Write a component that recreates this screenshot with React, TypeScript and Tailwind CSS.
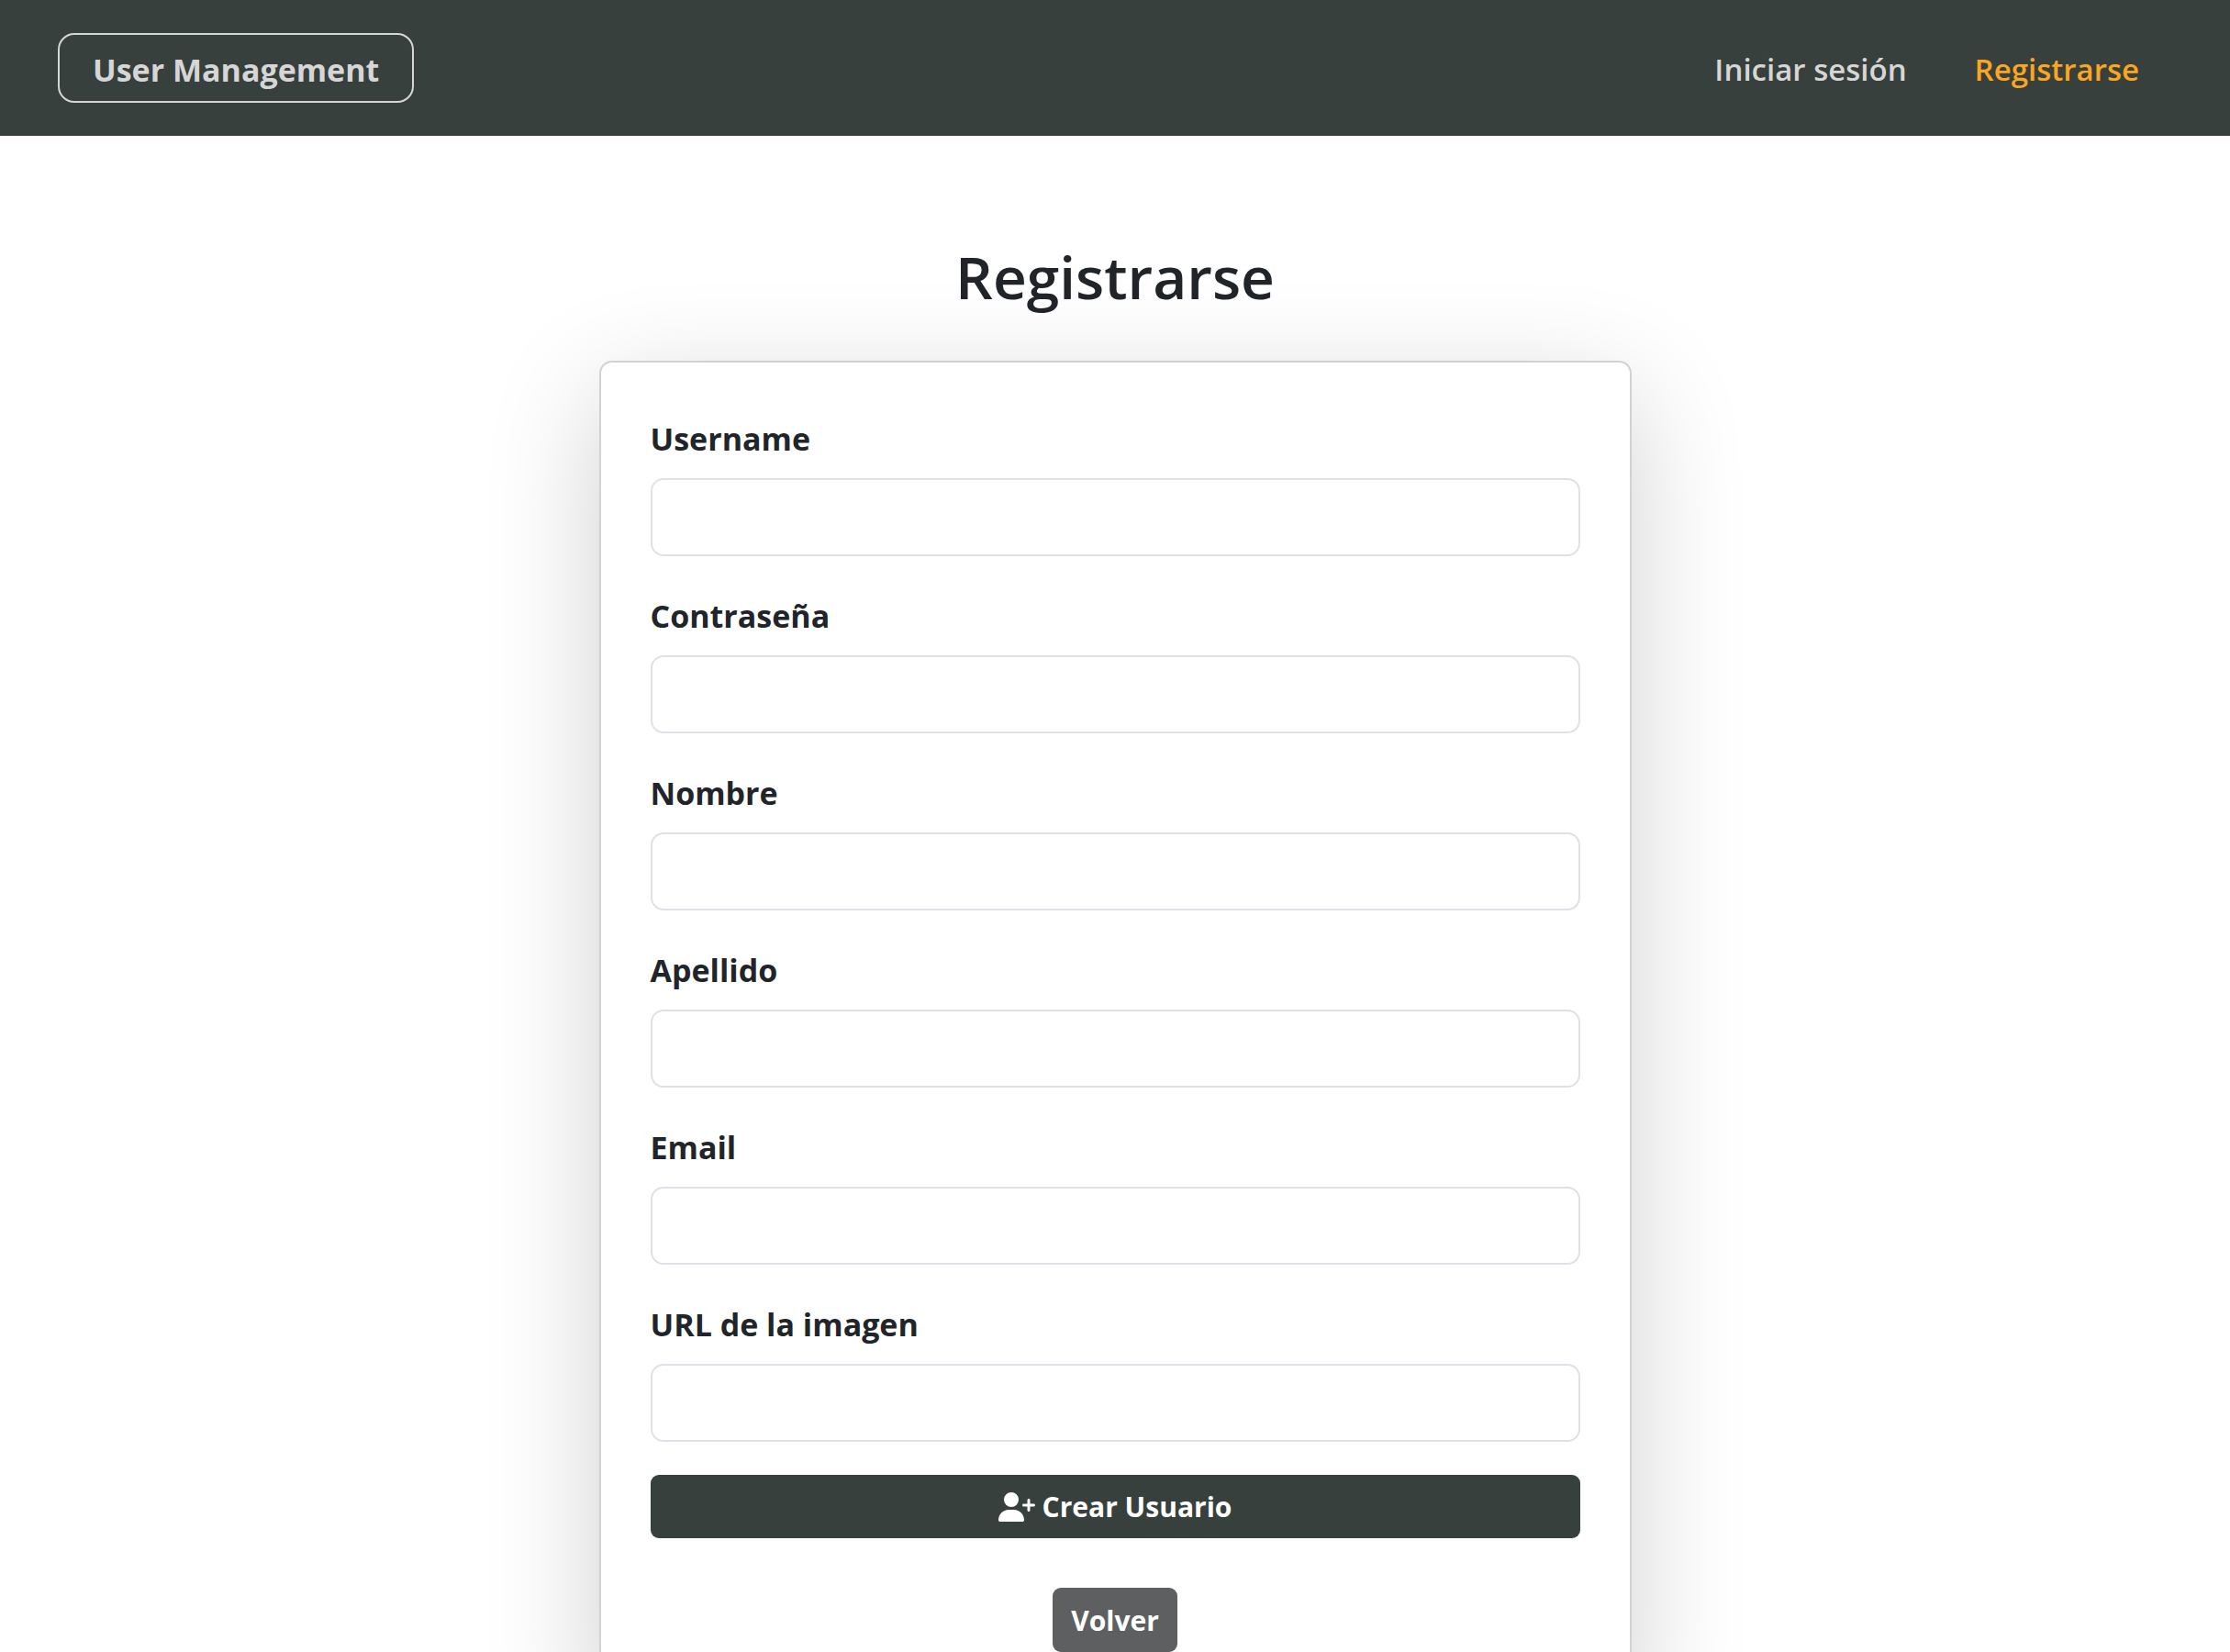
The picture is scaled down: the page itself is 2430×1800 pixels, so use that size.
import { FaUserPlus } from "react-icons/fa6";

const fields = [
  { id: "username", label: "Username", type: "text" },
  { id: "password", label: "Contraseña", type: "password" },
  { id: "nombre", label: "Nombre", type: "text" },
  { id: "apellido", label: "Apellido", type: "text" },
  { id: "email", label: "Email", type: "email" },
  { id: "imagen", label: "URL de la imagen", type: "url" },
];

function Navbar() {
  return (
    <header className="flex items-center justify-between bg-[#37403c] py-9 pl-[63px] pr-[99px] text-[34px] leading-[54px] text-[#d6d6d6]">
      <a href="#" className="flex h-[76px] items-center rounded-[18px] border-2 border-[#d6d6d6] px-9 pt-1 font-bold">
        User Management
      </a>
      <nav className="flex gap-[74px] pt-1 text-[33px] font-semibold">
        <a href="#login">Iniciar sesión</a>
        <a href="#register" className="text-[#f9a620]">Registrarse</a>
      </nav>
    </header>
  );
}

export default function App() {
  return (
    <div className="h-screen overflow-hidden bg-white font-['Open_Sans','Noto_Sans',sans-serif] text-[#212529]">
      <Navbar />
      <main className="flex flex-col items-center pt-[108px]">
        <h1 className="mb-[46px] text-[64px] font-semibold leading-[91px]">Registrarse</h1>
        <form className="flex w-full max-w-[1125px] flex-col rounded-[14px] border-2 border-[#d2d2d2] bg-white p-[54px] shadow-[0_36px_124px_rgba(0,0,0,0.19)]">
          {fields.map((f) => (
            <div key={f.id} className="mb-9 flex flex-col">
              <label htmlFor={f.id} className="mb-3.5 self-start text-[34px] font-bold leading-[58px]">
                {f.label}
              </label>
              <input
                id={f.id}
                type={f.type}
                className="h-[85px] rounded-[14px] border-2 border-[#dee2e6] bg-white px-[27px] text-[34px] outline-none"
              />
            </div>
          ))}
          <button type="submit" className="flex h-[69px] items-center justify-center gap-2 rounded-[9px] bg-[#37403c] text-[30px] font-bold text-white">
            <FaUserPlus className="h-8 w-10" />
            Crear Usuario
          </button>
          <button type="button" className="mt-[54px] h-[70px] self-center rounded-[9px] bg-[#5e5f61] px-5 text-[30px] font-bold text-white">
            Volver
          </button>
        </form>
      </main>
    </div>
  );
}
